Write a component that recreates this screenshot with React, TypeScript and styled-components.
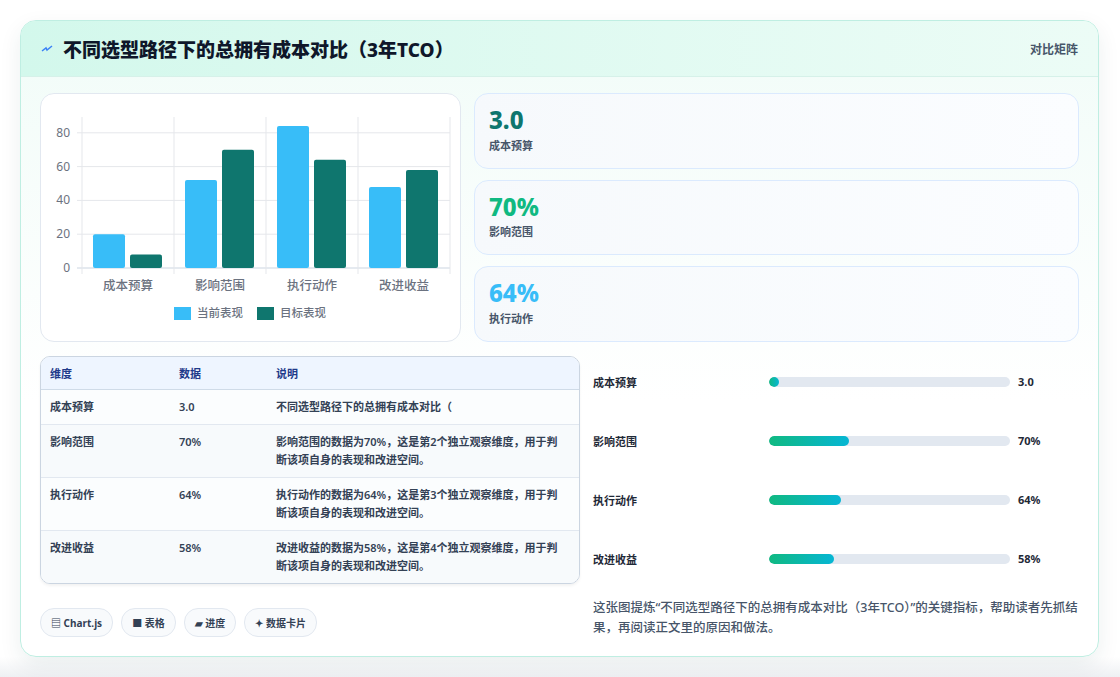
import styled, { createGlobalStyle } from 'styled-components';

const Global = createGlobalStyle`
    body {
        margin: 0;
        background: linear-gradient(#ffffff, #ffffff 97%, #eef0f3);
        font-family: "Noto Sans", "Noto Sans CJK SC", sans-serif;
        color: #1f2937;
    }
`

const Page = styled.div`
    width: 1120px;
    height: 677px;
    padding: 20px 21px 22px 20px;
    box-sizing: border-box;
`

const Card = styled.div`
    height: 100%;
    border: 1px solid #bfeee2;
    border-radius: 16px;
    background: linear-gradient(180deg, #f1fcf8, #ffffff 60%);
    box-shadow: 0 8px 22px rgba(15, 60, 60, 0.08);
    overflow: hidden;
    display: flex;
    flex-direction: column;
`

const Header = styled.div`
    height: 55px;
    flex-shrink: 0;
    display: flex;
    align-items: center;
    padding: 0 20px;
    background: linear-gradient(90deg, #d3f8ec, #ecfcf6);
    border-bottom: 1px solid #d6f1e9;
`

const Title = styled.h1`
    margin: 0;
    font-size: 19px;
    font-weight: 800;
    color: #0f172a;
    display: flex;
    align-items: center;
    gap: 10px;
`

const HeaderTag = styled.span`
    margin-left: auto;
    font-size: 12px;
    font-weight: 600;
    color: #475569;
`

const Body = styled.div`
    flex: 1;
    padding: 16px 19px 0 19px;
    display: grid;
    grid-template-columns: 421px 1fr;
    grid-template-rows: 249px 1fr;
    column-gap: 13px;
    row-gap: 14px;
`

const ChartBox = styled.div`
    border: 1px solid #e2e8f0;
    border-radius: 14px;
    background: #fff;
`

const Stats = styled.div`
    display: flex;
    flex-direction: column;
    gap: 11px;
`

const Stat = styled.div`
    flex: 1;
    border: 1px solid #dbeafe;
    border-radius: 14px;
    background: linear-gradient(90deg, #f6f9fc, #fbfdff);
    padding: 10px 14px 12px;
    display: flex;
    flex-direction: column;
    justify-content: center;
`

const StatValue = styled.div<{ $color: string }>`
    font-size: 24px;
    font-weight: 800;
    line-height: 1.1;
    color: ${({ $color }) => $color};
`

const StatLabel = styled.div`
    font-size: 11px;
    font-weight: 600;
    color: #475569;
    margin-top: 3px;
`

const Lower = styled.div`
    grid-column: 1 / 3;
    display: grid;
    grid-template-columns: 540px 1fr;
    column-gap: 13px;
`

const LeftCol = styled.div`
    display: flex;
    flex-direction: column;
`

const Table = styled.table`
    width: 100%;
    border-collapse: separate;
    border-spacing: 0;
    border: 1px solid #cbd5e1;
    border-radius: 10px;
    overflow: hidden;
    font-size: 11px;
    box-shadow: 0 2px 3px rgba(0, 0, 0, 0.05);

    th {
        background: #eef5ff;
        color: #1e3a8a;
        font-weight: 700;
        text-align: left;
        height: 32px;
        padding: 0 9px;
        border-bottom: 1px solid #cfdbe8;
    }
    td {
        color: #334155;
        font-weight: 600;
        padding: 8px 9px;
        line-height: 18px;
        vertical-align: top;
        border-bottom: 1px solid #e2e8f0;
        background: #fbfdfe;
    }
    td:last-child {
        padding-right: 16px;
    }
    tr:nth-child(even) td {
        background: #f7fafc;
    }
    tr:last-child td {
        border-bottom: none;
    }
    td:first-child, th:first-child { width: 111px; }
    td:nth-child(2), th:nth-child(2) { width: 79px; }
`

const Chips = styled.div`
    display: flex;
    gap: 8px;
    margin-top: 24px;
`

const Chip = styled.span`
    height: 27px;
    padding: 0 10px;
    border: 1px solid #e2e8f0;
    border-radius: 14px;
    background: #f8fafc;
    font-size: 10px;
    font-weight: 700;
    color: #334155;
    display: flex;
    align-items: center;
    gap: 3px;
`

const RightCol = styled.div`
    display: flex;
    flex-direction: column;
`

const Bars = styled.div`
    display: flex;
    flex-direction: column;
    justify-content: space-around;
    height: 236px;
    margin-top: -4px;
`

const BarRow = styled.div`
    display: flex;
    align-items: center;
    font-size: 11px;
    font-weight: 700;
    color: #1f2937;
`

const BarLabel = styled.span`
    width: 176px;
`

const Track = styled.div`
    width: 241px;
    height: 10px;
    border-radius: 5px;
    background: #e2e8f0;
    overflow: hidden;
`

const Fill = styled.div`
    height: 100%;
    border-radius: 5px;
    background: linear-gradient(90deg, #10b981, #06b6d4);
`

const BarValue = styled.span`
    margin-left: 8px;
`

const Note = styled.p`
    margin: 10px 0 0;
    font-size: 12.5px;
    line-height: 20px;
    color: #475569;
    font-weight: 500;
`

const yTicks = [0, 20, 40, 60, 80]
const groups = [
    { name: '成本预算', cur: 20, tgt: 8 },
    { name: '影响范围', cur: 52, tgt: 70 },
    { name: '执行动作', cur: 84, tgt: 64 },
    { name: '改进收益', cur: 48, tgt: 58 },
]

const Chart = () => {
    const zero = 174
    const k = 1.69
    return (
        <svg width="420" height="247" viewBox="0 0 420 247" fontFamily="'Noto Sans', 'Noto Sans CJK SC', sans-serif">
            {yTicks.map(t => (
                <g key={t}>
                    <line x1={36} x2={409} y1={zero - t * k} y2={zero - t * k} stroke={t === 0 ? '#cbd5e1' : '#e5e7eb'} />
                    <text x={29} y={zero - t * k + 4} fontSize="12" fill="#6b7280" textAnchor="end">{t}</text>
                </g>
            ))}
            {[41, 133, 225, 317, 409].map(x => (
                <line key={x} x1={x} x2={x} y1={23} y2={180} stroke="#e5e7eb" />
            ))}
            {groups.map((g, i) => {
                const x0 = 41 + i * 92
                return (
                    <g key={g.name}>
                        <rect x={x0 + 11} y={zero - g.cur * k} width={32} height={g.cur * k} rx={2} fill="#38bdf8" />
                        <rect x={x0 + 48} y={zero - g.tgt * k} width={32} height={g.tgt * k} rx={2} fill="#0f766e" />
                        <text x={x0 + 46} y={196} fontSize="12.5" fontWeight="500" fill="#6b7280" textAnchor="middle">{g.name}</text>
                    </g>
                )
            })}
            <rect x={133} y={213} width={17} height={13} fill="#38bdf8" />
            <text x={156} y={223} fontSize="11.5" fontWeight="500" fill="#6b7280">当前表现</text>
            <rect x={216} y={213} width={17} height={13} fill="#0f766e" />
            <text x={239} y={223} fontSize="11.5" fontWeight="500" fill="#6b7280">目标表现</text>
        </svg>
    )
}

const rows = [
    ['成本预算', '3.0', '不同选型路径下的总拥有成本对比（'],
    ['影响范围', '70%', '影响范围的数据为70%，这是第2个独立观察维度，用于判断该项自身的表现和改进空间。'],
    ['执行动作', '64%', '执行动作的数据为64%，这是第3个独立观察维度，用于判断该项自身的表现和改进空间。'],
    ['改进收益', '58%', '改进收益的数据为58%，这是第4个独立观察维度，用于判断该项自身的表现和改进空间。'],
]

const progress = [
    { name: '成本预算', value: '3.0', pct: 3 },
    { name: '影响范围', value: '70%', pct: 33 },
    { name: '执行动作', value: '64%', pct: 30 },
    { name: '改进收益', value: '58%', pct: 27 },
]

const App = () => {
    return (
        <Page>
            <Global />
            <Card>
                <Header>
                    <Title>
                        <svg width="12" height="10" viewBox="0 0 12 10">
                            <path d="M1 7 L5 4 L6 6 L11 2" stroke="#3b82f6" strokeWidth="1.5" fill="none" />
                        </svg>
                        不同选型路径下的总拥有成本对比（3年TCO）
                    </Title>
                    <HeaderTag>对比矩阵</HeaderTag>
                </Header>
                <Body>
                    <ChartBox><Chart /></ChartBox>
                    <Stats>
                        <Stat><StatValue $color="#0f766e">3.0</StatValue><StatLabel>成本预算</StatLabel></Stat>
                        <Stat><StatValue $color="#10b981">70%</StatValue><StatLabel>影响范围</StatLabel></Stat>
                        <Stat><StatValue $color="#38bdf8">64%</StatValue><StatLabel>执行动作</StatLabel></Stat>
                    </Stats>
                    <Lower>
                        <LeftCol>
                            <Table>
                                <thead>
                                    <tr><th>维度</th><th>数据</th><th>说明</th></tr>
                                </thead>
                                <tbody>
                                    {rows.map(r => (
                                        <tr key={r[0]}><td>{r[0]}</td><td>{r[1]}</td><td>{r[2]}</td></tr>
                                    ))}
                                </tbody>
                            </Table>
                            <Chips>
                                <Chip>▤ Chart.js</Chip>
                                <Chip>■ 表格</Chip>
                                <Chip>▰ 进度</Chip>
                                <Chip>✦ 数据卡片</Chip>
                            </Chips>
                        </LeftCol>
                        <RightCol>
                            <Bars>
                                {progress.map(p => (
                                    <BarRow key={p.name}>
                                        <BarLabel>{p.name}</BarLabel>
                                        <Track><Fill style={{ width: `${Math.max(p.pct, 4)}%` }} /></Track>
                                        <BarValue>{p.value}</BarValue>
                                    </BarRow>
                                ))}
                            </Bars>
                            <Note>这张图提炼“不同选型路径下的总拥有成本对比（3年TCO）”的关键指标，帮助读者先抓结果，再阅读正文里的原因和做法。</Note>
                        </RightCol>
                    </Lower>
                </Body>
            </Card>
        </Page>
    );
};

export default App;
